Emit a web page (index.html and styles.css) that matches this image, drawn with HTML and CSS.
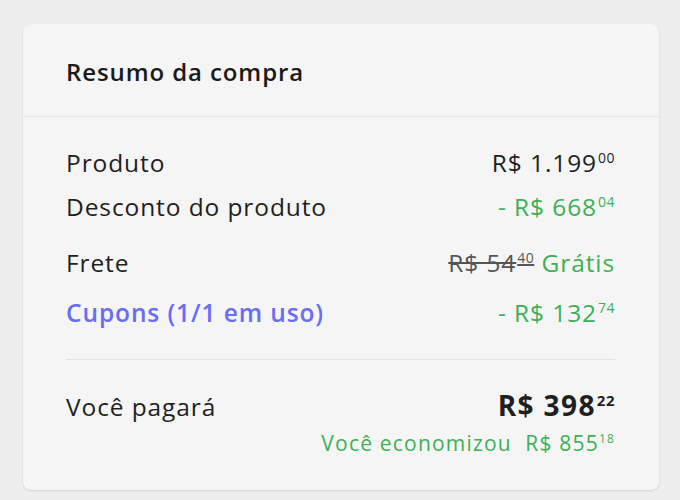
FILE: index.html
```html
<!DOCTYPE html>
<html lang="pt-BR">
<head>
  <meta charset="UTF-8" />
  <meta name="viewport" content="width=device-width, initial-scale=1.0"/>
  <title>Resumo da compra</title>
  <link rel="stylesheet" href="styles.css">
</head>
<body>
  <div class="card">
    <div class="card-header">
      <h2>Resumo da compra</h2>
    </div>

    <div class="card-body">
      <div class="row row-produto">
        <span>Produto</span>
        <span class="price">R$ 1.199<sup>00</sup></span>
      </div>
      <div class="row row-desconto">
        <span>Desconto do produto</span>
        <span class="price green">- R$ 668<sup>04</sup></span>
      </div>
      <div class="row row-frete">
        <span>Frete</span>
        <span class="price"><s class="old">R$ 54<sup>40</sup></s> <span class="green">Grátis</span></span>
      </div>
      <div class="row row-cupons">
        <span class="link">Cupons (1/1 em uso)</span>
        <span class="price green">- R$ 132<sup>74</sup></span>
      </div>

      <div class="divider"></div>

      <div class="row row-total">
        <span>Você pagará</span>
        <span class="price total">R$ 398<sup>22</sup></span>
      </div>
      <div class="saving">Você economizou&nbsp; R$ 855<sup>18</sup></div>
    </div>
  </div>
</body>
</html>
```

FILE: styles.css
```css
body {
  font-family: 'Open Sans', 'Lato', sans-serif;
  background-color: #ededed;
  margin: 0;
  padding: 24px 21px 10px 23px;
  color: #1f1f1f;
}

.card {
  background-color: #f5f5f5;
  border-radius: 8px;
  box-shadow: 0 1px 2px rgba(0, 0, 0, 0.12);
  height: 466px;
}

.card-header {
  height: 92px;
  border-bottom: 1px solid #e4e4e4;
  padding: 0 43px;
  display: flex;
  align-items: center;
}

.card-header h2 {
  margin: 2px 0 0;
  font-size: 24px;
  font-weight: 600;
  letter-spacing: 0.9px;
  color: #1a1a1a;
}

.card-body {
  padding: 28px 44px 0 43px;
}

.row {
  display: flex;
  justify-content: space-between;
  align-items: baseline;
  font-size: 24.5px;
  letter-spacing: 0.9px;
  line-height: 36px;
}

.row-desconto {
  margin-top: 8px;
}

.row-frete {
  margin-top: 20px;
}

.row-cupons {
  margin-top: 14px;
}

.price sup {
  font-size: 14px;
  vertical-align: 9px;
  line-height: 0;
  letter-spacing: 0.5px;
  margin-left: 1px;
}

.green {
  color: #3cb054;
}

.link {
  color: #6a6cf6;
  font-weight: 600;
}

.old {
  color: #555;
}

.divider {
  height: 1px;
  background-color: #e2e2e2;
  margin: 28px 0 27px;
}

.total {
  font-weight: 700;
  font-size: 28px;
  letter-spacing: 1.4px;
}

.total sup {
  font-size: 15px;
  vertical-align: 10px;
}

.saving {
  text-align: right;
  color: #3cb054;
  font-size: 21px;
  letter-spacing: 1.2px;
  margin-top: 4px;
}

.saving sup {
  font-size: 12px;
  vertical-align: 8px;
  line-height: 0;
}
```
